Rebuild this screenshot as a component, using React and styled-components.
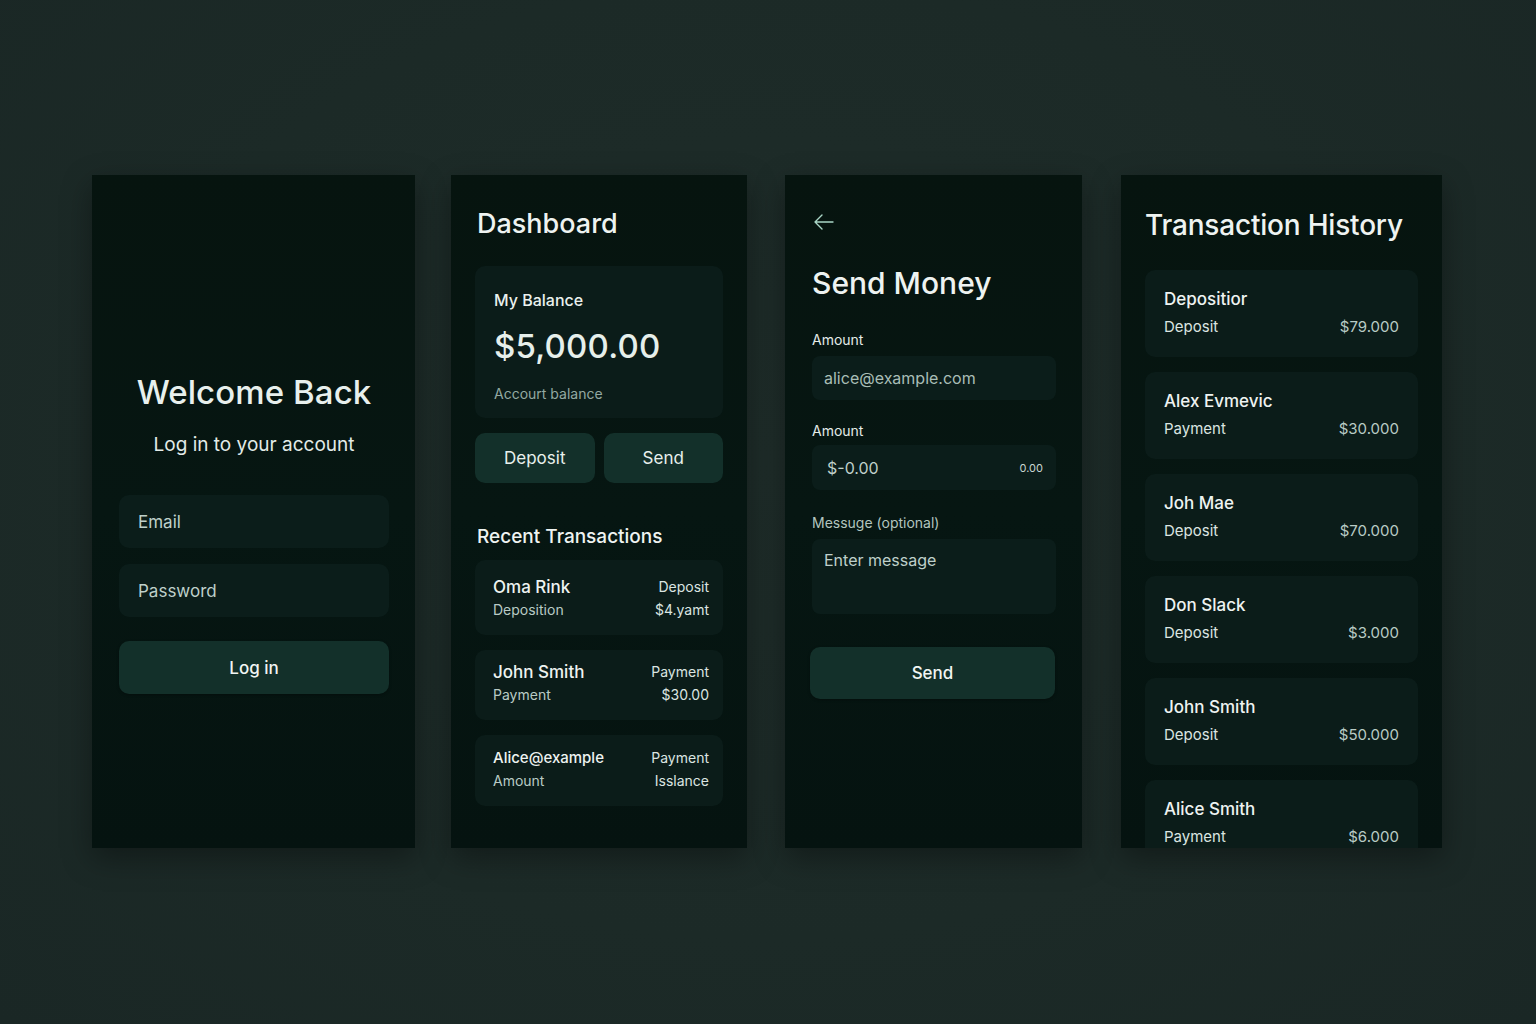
import React from "react";
import styled, { createGlobalStyle } from "styled-components";

const GlobalStyle = createGlobalStyle`
  html, body {
    margin: 0;
    padding: 0;
    background: #1c2a27;
    font-family: Inter, "Noto Sans", "Liberation Sans", sans-serif;
    color: #e9f0ed;
  }
  * { box-sizing: border-box; }
`;

const Stage = styled.div`
  width: 1536px;
  height: 1024px;
  display: flex;
  align-items: flex-start;
  gap: 36px;
  padding: 175px 0 0 92px;
  background: radial-gradient(ellipse at 50% 45%, #1f2d2a 0%, #1c2a27 60%, #1a2725 100%);
`;

const Phone = styled.div`
  width: ${(p) => p.w}px;
  height: 673px;
  flex-shrink: 0;
  margin-left: ${(p) => p.shift || 0}px;
  background: linear-gradient(180deg, #06140f 0%, #061612 50%, #051310 100%);
  box-shadow: 0 10px 28px rgba(0, 0, 0, 0.35);
  display: flex;
  flex-direction: column;
  padding: ${(p) => p.pad || "0 24px"};
  overflow: hidden;
`;

/* ---------- login ---------- */

const LoginTitle = styled.h1`
  margin: 197px 0 0;
  font-size: 33px;
  line-height: 40px;
  font-weight: 500;
  text-align: center;
  letter-spacing: 0.1px;
  color: #e8f0ed;
`;

const LoginSub = styled.p`
  margin: 21px 0 0;
  font-size: 19px;
  line-height: 24px;
  text-align: center;
  color: #e2ebe8;
`;

const Field = styled.div`
  height: ${(p) => p.h || 53}px;
  margin-top: ${(p) => p.mt || 0}px;
  background: #0b1d1a;
  border-radius: ${(p) => p.r || 10}px;
  display: flex;
  align-items: ${(p) => (p.top ? "flex-start" : "center")};
  justify-content: space-between;
  padding: ${(p) => p.pad || "0 19px"};
  font-size: ${(p) => p.fs || 17}px;
  color: ${(p) => (p.dim ? "#a9bdb6" : "#bfd0ca")};
`;

const Small = styled.span`
  font-size: 11px;
  color: #c8d6d1;
`;

const PrimaryButton = styled.button`
  height: ${(p) => p.h || 53}px;
  margin-top: ${(p) => p.mt || 0}px;
  margin-left: ${(p) => p.ml || 0}px;
  margin-right: ${(p) => p.mr || 0}px;
  width: ${(p) => (p.ml || p.mr ? "auto" : "100%")};
  border: none;
  border-radius: 10px;
  background: #13302a;
  color: #f1f5f3;
  font-family: inherit;
  font-size: 17px;
  font-weight: 500;
  box-shadow: 0 1px 3px rgba(0, 0, 0, 0.3);
`;

/* ---------- dashboard ---------- */

const Title = styled.h2`
  margin: ${(p) => p.mt || 32}px 0 0 ${(p) => p.ml || 0}px;
  font-size: ${(p) => p.fs || 27}px;
  line-height: 34px;
  font-weight: 500;
  letter-spacing: ${(p) => p.ls || 0}px;
  color: #eef3f1;
  white-space: nowrap;
`;

const BalanceCard = styled.div`
  margin-top: 25px;
  height: 152px;
  background: #0b1c19;
  border-radius: 10px;
  padding: 24px 19px 0;
  display: flex;
  flex-direction: column;
`;

const BalanceLabel = styled.div`
  font-size: 16px;
  line-height: 20px;
  font-weight: 500;
  color: #eaf1ee;
`;

const BalanceAmount = styled.div`
  margin-top: 14px;
  font-size: 33px;
  line-height: 44px;
  font-weight: 500;
  letter-spacing: 0.2px;
  color: #e6efeb;
`;

const BalanceNote = styled.div`
  margin-top: 17px;
  font-size: 14px;
  line-height: 18px;
  color: #93a9a2;
`;

const ButtonRow = styled.div`
  margin-top: 15px;
  display: flex;
  gap: 9px;
`;

const ActionButton = styled.button`
  flex: 1;
  height: 50px;
  border: none;
  border-radius: 10px;
  background: #13302a;
  color: #e9f0ed;
  font-family: inherit;
  font-size: 17px;
`;

const SectionTitle = styled.h3`
  margin: 42px 0 0 2px;
  font-size: 19px;
  line-height: 24px;
  font-weight: 500;
  color: #eef3f1;
`;

const TxList = styled.div`
  margin-top: ${(p) => p.mt || 11}px;
  display: flex;
  flex-direction: column;
  gap: 15px;
`;

const TxCard = styled.div`
  height: ${(p) => p.h}px;
  flex-shrink: 0;
  background: #0b1c19;
  border-radius: 10px;
  padding: ${(p) => p.pad};
  display: flex;
  justify-content: space-between;
  align-items: flex-start;
`;

const Col = styled.div`
  display: flex;
  flex-direction: column;
  align-items: ${(p) => (p.right ? "flex-end" : "flex-start")};
  gap: ${(p) => p.gap || 4}px;
`;

const Name = styled.div`
  font-size: ${(p) => p.fs || 17}px;
  line-height: 20px;
  font-weight: 500;
  color: #eef3f1;
  white-space: nowrap;
`;

const Sub = styled.div`
  font-size: ${(p) => p.fs || 14}px;
  line-height: 20px;
  color: ${(p) => (p.light ? "#dbe5e1" : "#b9cbc5")};
  white-space: nowrap;
`;

/* ---------- send money ---------- */

const BackArrow = styled.svg`
  margin-top: 38px;
  margin-left: 1px;
  width: 22px;
  height: 18px;
`;

const Label = styled.div`
  margin-top: ${(p) => p.mt}px;
  font-size: 14px;
  line-height: 18px;
  color: ${(p) => (p.muted ? "#b3c5bf" : "#e3ebe8")};
`;

/* ---------- history ---------- */

const HistCard = styled.div`
  height: 87px;
  flex-shrink: 0;
  background: #0b1c19;
  border-radius: 10px;
  padding: 19px 19px 0;
  display: flex;
  flex-direction: column;
`;

const HistRow = styled.div`
  margin-top: 8px;
  display: flex;
  justify-content: space-between;
  align-items: center;
`;

const history = [
  { name: "Depositior", type: "Deposit", amount: "$79.000" },
  { name: "Alex Evmevic", type: "Payment", amount: "$30.000" },
  { name: "Joh Mae", type: "Deposit", amount: "$70.000" },
  { name: "Don Slack", type: "Deposit", amount: "$3.000" },
  { name: "John Smith", type: "Deposit", amount: "$50.000" },
  { name: "Alice Smith", type: "Payment", amount: "$6.000" },
];

const recent = [
  { name: "Oma Rink", sub: "Deposition", type: "Deposit", amount: "$4.yamt", h: 75, pt: 17 },
  { name: "John Smith", sub: "Payment", type: "Payment", amount: "$30.00", h: 70, pt: 12 },
  { name: "Alice@example", sub: "Amount", type: "Payment", amount: "Isslance", h: 71, pt: 13 },
];

export default function App() {
  return (
    <>
      <GlobalStyle />
      <Stage>
        <Phone w={323} pad="0 26px 0 27px">
          <LoginTitle>Welcome Back</LoginTitle>
          <LoginSub>Log in to your account</LoginSub>
          <Field mt={38}>Email</Field>
          <Field mt={16}>Password</Field>
          <PrimaryButton mt={24}>Log in</PrimaryButton>
        </Phone>

        <Phone w={296}>
          <Title ml={2}>Dashboard</Title>
          <BalanceCard>
            <BalanceLabel>My Balance</BalanceLabel>
            <BalanceAmount>$5,000.00</BalanceAmount>
            <BalanceNote>Accourt balance</BalanceNote>
          </BalanceCard>
          <ButtonRow>
            <ActionButton>Deposit</ActionButton>
            <ActionButton>Send</ActionButton>
          </ButtonRow>
          <SectionTitle>Recent Transactions</SectionTitle>
          <TxList>
            {recent.map((t) => (
              <TxCard key={t.name} h={t.h} pad={`${t.pt}px 14px 0 18px`}>
                <Col gap={3}>
                  <Name fs={t.name.length > 10 ? 15 : 17}>{t.name}</Name>
                  <Sub>{t.sub}</Sub>
                </Col>
                <Col right gap={3}>
                  <Sub light>{t.type}</Sub>
                  <Sub light>{t.amount}</Sub>
                </Col>
              </TxCard>
            ))}
          </TxList>
        </Phone>

        <Phone w={297} shift={2} pad="0 26px 0 27px">
          <BackArrow viewBox="0 0 22 18" fill="none">
            <path
              d="M20 9H2M9 2L2 9l7 7"
              stroke="#a9d6c6"
              strokeWidth="1.4"
              strokeLinecap="round"
              strokeLinejoin="round"
            />
          </BackArrow>
          <Title mt={35} fs={30}>Send Money</Title>
          <Label mt={31}>Amount</Label>
          <Field mt={7} h={44} r={8} pad="0 12px" fs={16} dim>
            alice@example.com
          </Field>
          <Label mt={22}>Amount</Label>
          <Field mt={5} h={45} r={8} pad="0 13px 0 15px" fs={16}>
            <span>$-0.00</span>
            <Small>0.00</Small>
          </Field>
          <Label mt={24} muted>Messuge (optional)</Label>
          <Field mt={7} h={75} r={8} top pad="11px 12px 0" fs={16}>
            Enter message
          </Field>
          <PrimaryButton mt={33} h={52} mr={1} ml={-2}>
            Send
          </PrimaryButton>
        </Phone>

        <Phone w={321} shift={3}>
          <Title fs={28} ls={-0.2} mt={33}>Transaction History</Title>
          <TxList mt={28}>
            {history.map((t) => (
              <HistCard key={t.name}>
                <Name>{t.name}</Name>
                <HistRow>
                  <Sub fs={15} light>{t.type}</Sub>
                  <Sub fs={15}>{t.amount}</Sub>
                </HistRow>
              </HistCard>
            ))}
          </TxList>
        </Phone>
      </Stage>
    </>
  );
}
